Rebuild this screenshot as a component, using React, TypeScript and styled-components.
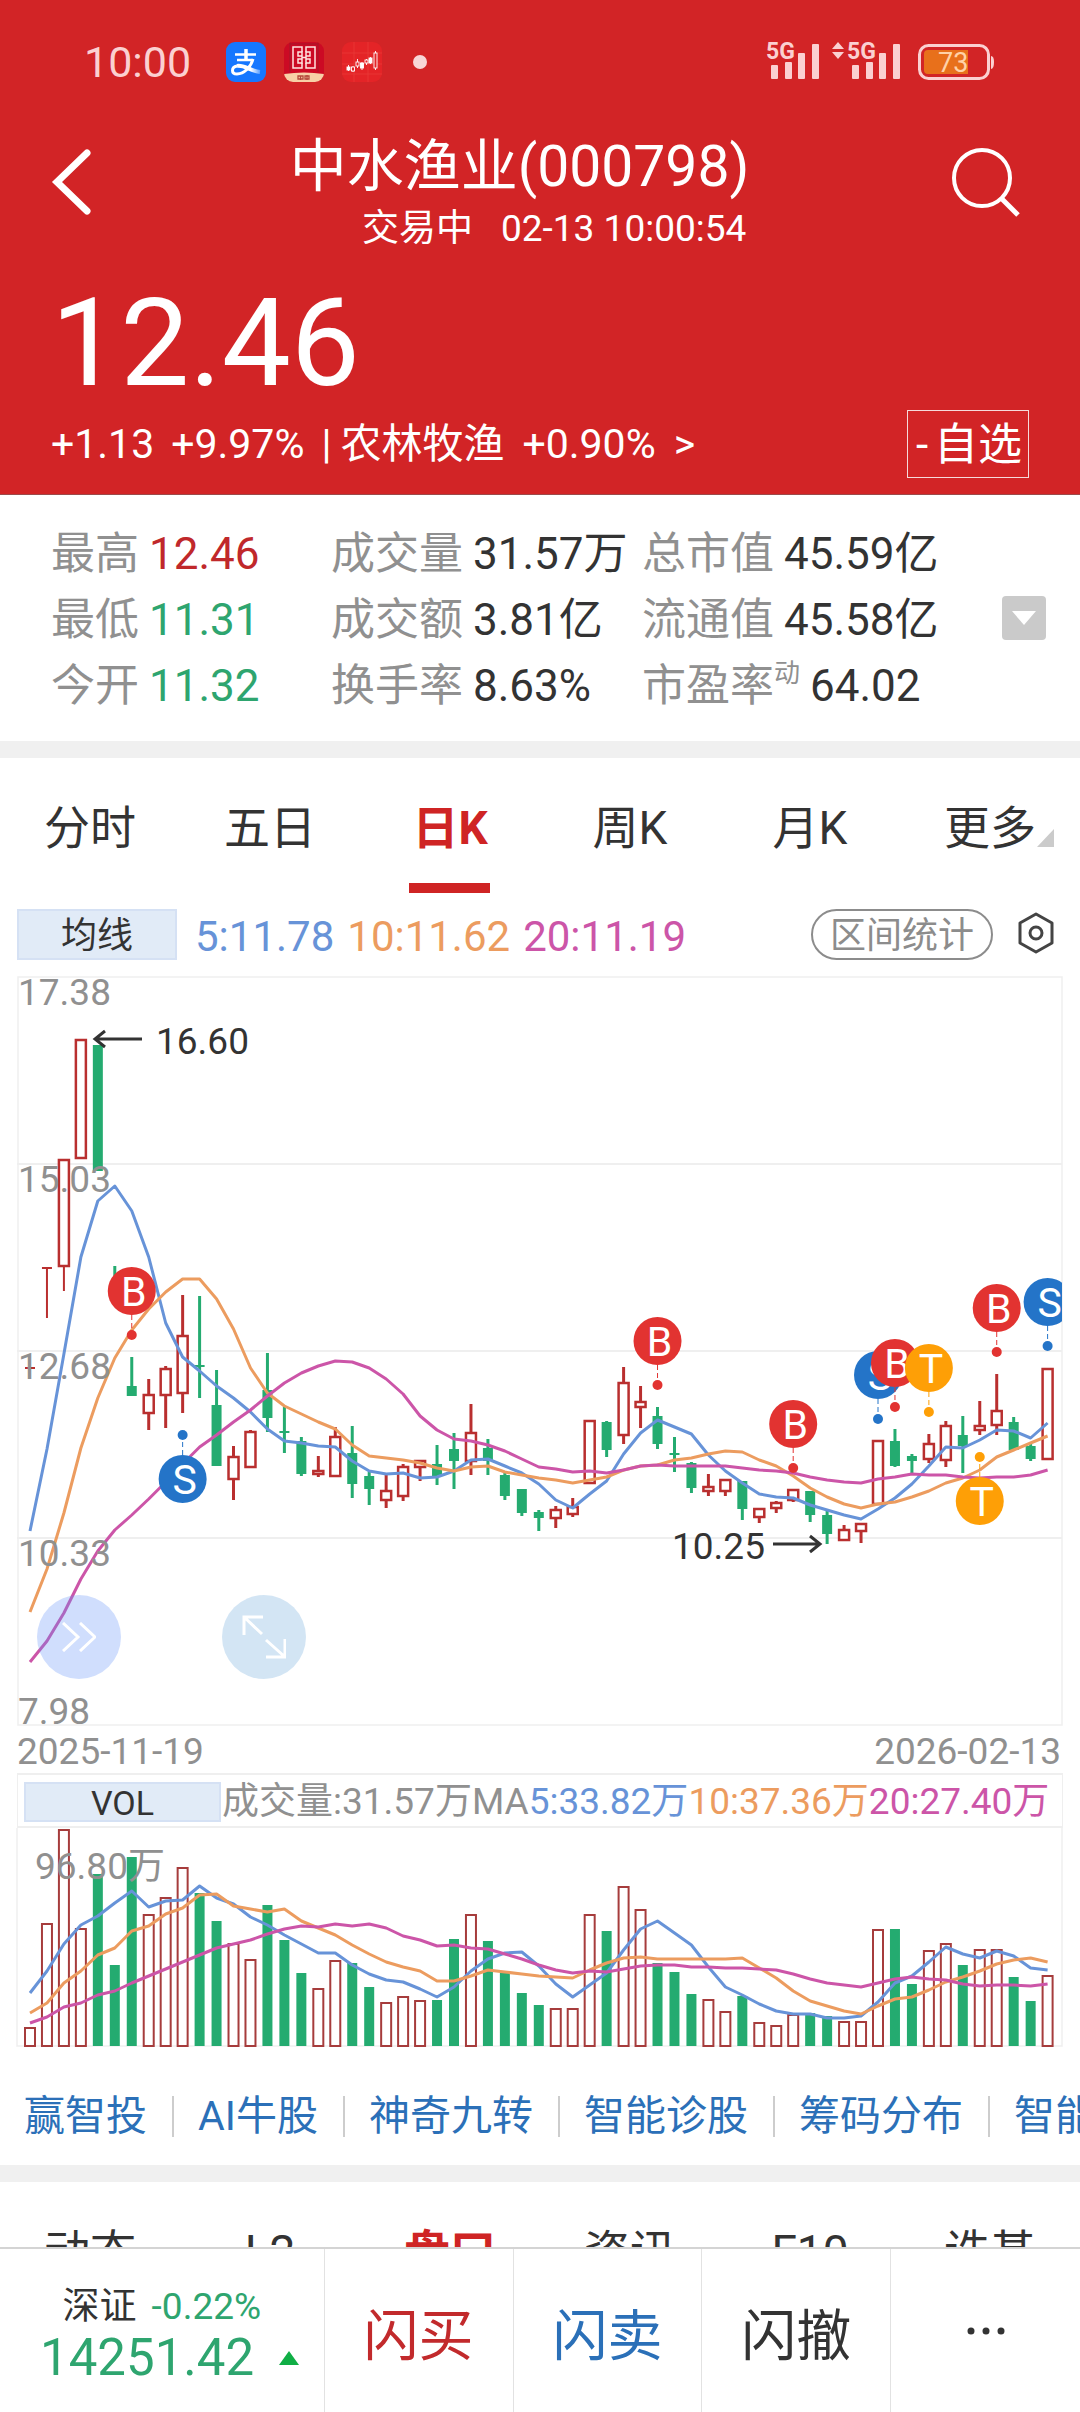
import React from "react";
import styled, { createGlobalStyle, css } from "styled-components";

const color = {
  brand: "#d22426",
  up: "#b92f2f",
  down: "#24ab70",
  downText: "#2ea56f",
  ink: "#333333",
  muted: "#909090",
  rule: "#efefef",
  ma5: "#6793d8",
  ma10: "#ec9c5f",
  ma20: "#cc55a8",
  link: "#2b70b8",
  soft: "#fbd0d1",
};

const GlobalStyle = createGlobalStyle`
  * { box-sizing: border-box; }
  html, body { margin: 0; padding: 0; background: #fff; }
  body { font-family: Roboto, "Noto Sans CJK SC", sans-serif; color: ${color.ink}; }
  button { font: inherit; color: inherit; background: none; border: 0; padding: 0; margin: 0; cursor: pointer; }
  dl, dt, dd, h1, p { margin: 0; font-weight: 400; }
  a { text-decoration: none; }
`;

const Screen = styled.div`
  display: flex;
  flex-direction: column;
  height: 100vh;
  overflow: hidden;
`;

const Content = styled.main`
  flex: 1;
  min-height: 0;
  overflow-y: auto;
  scrollbar-width: none;
`;

/* ---------- header ---------- */

const Header = styled.header`
  background: ${color.brand};
  color: #fff;
  border-bottom: 1px solid #9c4a4a;
`;

const StatusBar = styled.div`
  display: flex;
  align-items: center;
  height: 124px;
  padding: 0 85px 0 84px;
  color: ${color.soft};
`;

const Clock = styled.span`
  font-size: 43px;
  line-height: 50px;
  margin-right: 35px;
`;

const AppIcons = styled.div`
  display: flex;
  align-items: center;
  gap: 18px;
  flex: 1;
`;

const MoreDot = styled.span`
  width: 14px;
  height: 14px;
  margin-left: 13px;
  border-radius: 50%;
  background: #f8d6d6;
`;

const Nav = styled.div`
  display: flex;
  justify-content: space-between;
  padding: 7px 60px 0 51px;
`;

const IconButton = styled.button`
  display: flex;
  align-items: center;
  height: 102px;
`;

const Titles = styled.div`
  text-align: right;
`;

const Title = styled.h1`
  font-size: 57px;
  line-height: 72px;
`;

const Subtitle = styled.p`
  display: flex;
  justify-content: flex-end;
  gap: 28px;
  padding-right: 3px;
  font-size: 37px;
  line-height: 52px;
`;

const Price = styled.div`
  padding: 21px 51px 0;
  font-size: 123px;
  line-height: 134px;
`;

const QuoteRow = styled.div`
  display: flex;
  align-items: center;
  gap: 17px;
  padding: 0 51px 16px;
  font-size: 41px;
  line-height: 68px;
  white-space: nowrap;
`;

const Sector = styled.a`
  display: flex;
  gap: 18px;
  color: inherit;
`;

const SectorName = styled.span`
  display: flex;
  gap: 9px;
`;

const WatchButton = styled.button`
  display: flex;
  align-items: center;
  justify-content: center;
  gap: 6px;
  height: 68px;
  width: 122px;
  margin-left: auto;
  padding: 2px 0 0 2px;
  border: 1px solid #f6dada;
  font-size: 44px;
  line-height: 64px;
`;

/* ---------- figures ---------- */

const Stats = styled.section`
  display: flex;
  align-items: center;
  padding: 26px 34px 22px 51px;
`;

const StatGrid = styled.dl`
  flex: 1;
  display: grid;
  grid-template-columns: 280fr 311fr 360fr;
  font-size: 44px;
  line-height: 66px;
  white-space: nowrap;
`;

const Stat = styled.div`
  display: flex;
  gap: 10px;
`;

const StatLabel = styled.dt`
  display: flex;
  color: ${color.muted};
`;

const Sup = styled.sup`
  font-size: 26px;
  line-height: 40px;
  vertical-align: top;
`;

const StatValue = styled.dd<{ $tone?: string }>`
  color: ${(p) => p.$tone ?? color.ink};
`;

const Expand = styled.button`
  display: flex;
  align-items: center;
  justify-content: center;
  width: 44px;
  height: 44px;
  margin-bottom: 4px;
  border-radius: 4px;
  background: #cacaca;
`;

const Band = styled.div`
  height: 17px;
  background: #f0f0f0;
`;

/* ---------- tabs ---------- */

const TabBar = styled.div`
  display: grid;
  grid-template-columns: repeat(6, 1fr);
`;

const Tab = styled.button<{ $active?: boolean }>`
  position: relative;
  height: 135px;
  padding-top: 4px;
  font-size: 46px;
  line-height: 60px;
  ${(p) =>
    p.$active &&
    css`
      color: #cf2424;
      font-weight: 700;
      &::after {
        content: "";
        position: absolute;
        left: calc(50% - 41px);
        bottom: 0;
        width: 81px;
        height: 10px;
        background: #cf2424;
      }
    `}
`;

const Corner = styled.svg`
  position: absolute;
  right: 26px;
  bottom: 46px;
`;

/* ---------- chart ---------- */

const Indicators = styled.div`
  display: flex;
  align-items: center;
  padding: 16px 26px 16px 17px;
`;

const Badge = styled.button<{ $wide?: boolean }>`
  width: ${(p) => (p.$wide ? 197 : 160)}px;
  height: ${(p) => (p.$wide ? 40 : 51)}px;
  padding-top: 2px;
  border: 2px solid #d5e1f4;
  background: #e1ebf7;
  color: ${color.ink};
  font-size: ${(p) => (p.$wide ? 34 : 36)}px;
  line-height: 34px;
  flex: none;
`;

const Averages = styled.div`
  display: flex;
  gap: 13px;
  flex: 1;
  padding: 4px 0 0 18px;
  font-size: 42px;
  line-height: 46px;
  white-space: nowrap;
`;

const Tone = styled.span<{ $c: string }>`
  color: ${(p) => p.$c};
`;

const RangeButton = styled.button`
  width: 182px;
  height: 51px;
  margin-right: 25px;
  padding-top: 2px;
  border: 2px solid #8c8c8c;
  border-radius: 26px;
  color: #8c8c8c;
  font-size: 36px;
  line-height: 44px;
`;

const ChartArea = styled.div`
  position: relative;
`;

const Plot = styled.svg`
  display: block;
  width: 100%;
  height: auto;
  font-family: Roboto, "Noto Sans CJK SC", sans-serif;
  font-size: 37px;
`;

const FloatButton = styled.button<{ $left: number; $bg: string }>`
  position: absolute;
  left: ${(p) => p.$left}px;
  bottom: 47px;
  display: flex;
  align-items: center;
  justify-content: center;
  width: 84px;
  height: 84px;
  border-radius: 50%;
  background: ${(p) => p.$bg};
`;

const Dates = styled.div`
  display: flex;
  justify-content: space-between;
  padding: 4px 19px 0 17px;
  font-size: 37px;
  line-height: 43px;
  color: ${color.muted};
`;

const VolumeLegend = styled.div`
  display: flex;
  align-items: center;
  height: 55px;
  margin: 0 17px;
  padding: 2px 0 0 6px;
  border: 2px solid ${color.rule};
  border-width: 2px 1px;
  font-size: 37px;
  line-height: 44px;
  color: ${color.muted};
  white-space: nowrap;
`;

const LegendText = styled.span`
  padding-left: 1px;
`;

/* ---------- shortcuts and footer ---------- */

const Shortcuts = styled.nav`
  display: flex;
  align-items: center;
  height: 118px;
  padding: 20px 0 0;
  overflow: hidden;
`;

const Shortcut = styled.a`
  flex: none;
  padding: 0 25px 0 24px;
  border-right: 2px solid #cdcdcd;
  font-size: 41px;
  line-height: 41px;
  color: ${color.link};
`;

const Footer = styled.footer`
  flex: none;
  display: grid;
  grid-template-columns: 325fr repeat(4, 189fr);
  height: 165px;
  border-top: 2px solid #d4d4d4;
  background: #fff;
`;

const IndexCell = styled.a`
  display: flex;
  flex-direction: column;
  justify-content: center;
  padding-top: 8px;
  border-right: 1px solid #e2e2e2;
  color: ${color.downText};
`;

const IndexName = styled.span`
  display: flex;
  justify-content: center;
  gap: 15px;
  font-size: 37px;
  line-height: 46px;
`;

const IndexValue = styled.span`
  display: flex;
  align-items: center;
  gap: 25px;
  padding-left: 40px;
  font-size: 51px;
  line-height: 56px;
`;

const Trade = styled.button<{ $c: string }>`
  display: flex;
  align-items: center;
  justify-content: center;
  border-right: 1px solid #e2e2e2;
  font-size: 55px;
  color: ${(p) => p.$c};
  &:last-child {
    border-right: 0;
  }
`;

/* ---------- data ---------- */

type Candle = [kind: "r" | "g", high: number, top: number, bottom: number, low: number];

const candles: Candle[] = [
  ["r", 392, 392, 392, 392], ["r", 292, 292, 292, 342], ["r", 183, 183, 291, 315], ["r", 63, 63, 183, 183],
  ["g", 69, 69, 195, 195], ["g", 290, 308, 322, 322], ["g", 381, 410, 420, 420], ["r", 403, 418, 438, 454],
  ["r", 390, 392, 420, 452], ["r", 319, 359, 418, 437], ["g", 320, 389, 391, 422], ["g", 394, 429, 490, 490],
  ["r", 470, 480, 504, 524], ["r", 454, 455, 492, 492], ["g", 377, 414, 442, 456], ["g", 431, 455, 457, 477],
  ["g", 461, 465, 498, 500], ["r", 480, 494, 499, 501], ["r", 451, 460, 501, 501], ["g", 450, 477, 508, 522],
  ["g", 496, 500, 513, 529], ["r", 499, 514, 525, 532], ["r", 488, 490, 521, 525], ["r", 484, 484, 492, 505],
  ["g", 469, 488, 500, 509], ["g", 457, 473, 485, 513], ["r", 428, 456, 486, 499], ["g", 463, 472, 485, 499],
  ["g", 497, 499, 520, 524], ["g", 513, 513, 537, 540], ["g", 534, 536, 542, 555], ["r", 530, 533, 543, 552],
  ["r", 522, 530, 539, 541], ["r", 444, 444, 508, 508], ["g", 445, 446, 474, 481], ["r", 391, 406, 460, 468],
  ["r", 410, 425, 432, 452], ["g", 431, 440, 468, 473], ["g", 461, 477, 479, 496], ["g", 486, 487, 512, 517],
  ["r", 498, 510, 516, 520], ["r", 503, 503, 516, 520], ["g", 505, 505, 533, 544], ["r", 532, 532, 542, 547],
  ["r", 525, 526, 533, 537], ["r", 513, 513, 525, 526], ["g", 515, 515, 539, 546], ["g", 535, 539, 558, 568],
  ["r", 549, 553, 565, 565], ["r", 547, 547, 556, 567], ["r", 464, 464, 529, 529], ["g", 453, 465, 490, 491],
  ["g", 478, 480, 485, 497], ["r", 458, 467, 484, 487], ["r", 445, 449, 485, 491], ["g", 440, 459, 470, 497],
  ["r", 425, 449, 455, 459], ["r", 398, 434, 450, 459], ["g", 441, 446, 474, 474], ["g", 468, 470, 483, 485],
  ["r", 392, 392, 484, 484],
];

const priceMa5 = [
  555, 473, 378, 281, 225, 210, 235, 281, 347, 381, 395, 410, 422, 436, 453, 465, 467, 470, 471, 485, 495, 498, 497,
  502, 501, 495, 484, 483, 490, 497, 508, 524, 532, 518, 505, 478, 457, 444, 451, 458, 479, 495, 507, 518, 521, 522,
  529, 534, 539, 543, 533, 522, 508, 490, 471, 472, 464, 454, 455, 462, 447,
];
const priceMa10 = [
  636, 593, 537, 472, 422, 382, 354, 333, 316, 303, 303, 323, 353, 392, 417, 430, 438, 446, 453, 469, 480, 482, 484,
  487, 492, 495, 491, 490, 496, 499, 502, 504, 507, 504, 501, 494, 490, 489, 484, 482, 478, 475, 476, 484, 490, 500,
  512, 521, 528, 532, 528, 526, 521, 515, 507, 502, 494, 481, 474, 467, 460,
];
const priceMa20 = [
  686, 665, 637, 603, 575, 554, 539, 523, 506, 488, 471, 459, 446, 434, 420, 407, 397, 390, 385, 386, 392, 403, 418,
  440, 454, 463, 465, 469, 475, 483, 491, 493, 496, 495, 497, 494, 490, 489, 490, 490, 490, 490, 492, 494, 495, 497,
  501, 504, 506, 507, 503, 501, 498, 499, 499, 501, 502, 501, 501, 499, 494,
];

const volumeTops = [
  199, 95, 1, 100, 46, 137, 29, 86, 69, 39, 65, 93, 115, 131, 77, 112, 145, 160, 132, 135, 159, 174, 168, 172, 172,
  111, 86, 113, 145, 165, 177, 180, 180, 86, 103, 58, 81, 135, 144, 166, 171, 183, 168, 194, 197, 186, 185, 188, 193,
  193, 101, 101, 156, 122, 115, 137, 121, 121, 149, 173, 147,
];
const volMa5 = [
  165, 143, 116, 97, 88, 75, 63, 79, 73, 72, 58, 70, 76, 89, 97, 107, 116, 125, 125, 137, 146, 152, 154, 161, 169, 159,
  143, 131, 125, 124, 138, 156, 169, 157, 145, 122, 101, 93, 105, 117, 139, 159, 167, 176, 183, 186, 186, 190, 190,
  188, 174, 155, 148, 134, 119, 126, 130, 123, 128, 140, 142,
];
const volMa10 = [
  185, 175, 155, 143, 127, 120, 103, 98, 86, 80, 67, 66, 78, 81, 84, 81, 93, 100, 107, 117, 126, 134, 139, 143, 153,
  153, 148, 142, 144, 146, 148, 149, 150, 142, 135, 130, 129, 131, 131, 131, 131, 131, 130, 140, 150, 163, 173, 178,
  183, 186, 178, 171, 169, 162, 154, 149, 143, 136, 132, 130, 134,
];
const volMa20 = [
  195, 189, 179, 175, 167, 163, 155, 148, 141, 134, 127, 120, 116, 112, 106, 101, 98, 99, 96, 98, 96, 100, 108, 112,
  118, 117, 120, 121, 126, 131, 137, 142, 145, 143, 144, 141, 138, 137, 137, 139, 139, 140, 140, 141, 142, 146, 151,
  155, 157, 159, 155, 151, 149, 151, 152, 156, 158, 157, 157, 158, 156,
];

const markerFill = { B: "#e23331", S: "#2474c8", T: "#fe9f06" };
const markers: { at: number; kind: "B" | "S" | "T"; y: number; dot: number }[] = [
  { at: 6, kind: "B", y: 315, dot: 359 },
  { at: 9, kind: "S", y: 503, dot: 459 },
  { at: 37, kind: "B", y: 365, dot: 409 },
  { at: 45, kind: "B", y: 448, dot: 492 },
  { at: 50, kind: "S", y: 399, dot: 443 },
  { at: 51, kind: "B", y: 387, dot: 431 },
  { at: 53, kind: "T", y: 392, dot: 436 },
  { at: 56, kind: "T", y: 525, dot: 481 },
  { at: 57, kind: "B", y: 332, dot: 376 },
  { at: 60, kind: "S", y: 326, dot: 370 },
];

const candleX = (i: number) => 30 + 16.96 * i;
const linePoints = (ys: number[]) => ys.map((y, i) => `${candleX(i).toFixed(1)},${y}`).join(" ");

/* ---------- drawings ---------- */

const AlipayIcon = () => (
  <svg width="40" height="40" viewBox="0 0 40 40" fill="none" stroke="#fff" aria-hidden="true">
    <defs>
      <linearGradient id="tail" x1="0" x2="1">
        <stop offset="0.600" stopColor="#fff" />
        <stop offset="1" stopColor="#fff" stopOpacity="0.300" />
      </linearGradient>
    </defs>
    <rect width="40" height="40" rx="9" fill="#1677ff" stroke="none" />
    <path d="M20 7V18" strokeWidth="3.500" />
    <path d="M9 12.500H30M11 18H27" strokeWidth="2.500" />
    <path d="M27 17C25 25 18 32 11 32C5 32 5 25 11 24" strokeWidth="3" />
    <path d="M11 24C18 22.500 24 29 34 30" stroke="url(#tail)" strokeWidth="4" />
  </svg>
);

const BankIcon = () => (
  <svg width="40" height="40" viewBox="0 0 40 40" aria-hidden="true">
    <defs>
      <clipPath id="bankTile"><rect width="40" height="40" rx="9" /></clipPath>
    </defs>
    <g clipPath="url(#bankTile)">
      <rect width="40" height="40" fill="#cc0a24" />
      <path d="M6 0V30M34 0V30M6 2H34" stroke="#b01428" strokeWidth="1.500" fill="none" />
      <path d="M0 32Q20 29 40 32V40H0Z" fill="#f8d0a6" />
      <g fill="none" stroke="#ffe3df" strokeWidth="1.500">
        <path d="M18 10V5H9V26H18V21M22 10V5H31V26H22V21" />
        <path d="M14 10H18V14H14ZM22 10H26V14H22ZM14 17H18V21H14ZM22 17H26V21H22ZM18 12V19M22 12V19M18 15.500H22" />
      </g>
      <path d="M14 34H19V37H14ZM21 34H25V37H21ZM16.500 34V38M23 33V38" fill="none" stroke="#b4473a" strokeWidth="1.300" />
    </g>
  </svg>
);

const StockIcon = () => (
  <svg width="40" height="40" viewBox="0 0 40 40" aria-hidden="true">
    <rect width="40" height="40" rx="9" fill="#e42427" />
    <path d="M12 0V40M26 0V40M0 11H40M0 22H40M0 32H40" stroke="#e83a39" strokeWidth="0.800" />
    <g fill="#fff" stroke="#fff" strokeWidth="0.900">
      <path d="M6.500 23V29M11 24V30M15.500 17V26M20 20V28M24.500 17V23M28.500 15V22M33.500 9V28" />
      <rect x="5" y="25" width="3" height="3" />
      <rect x="9.500" y="25" width="3" height="4" fill="#e42427" />
      <rect x="14" y="20" width="3" height="4" fill="#e42427" />
      <rect x="18.500" y="21" width="3" height="5" />
      <rect x="23" y="18" width="3" height="3" fill="#e42427" />
      <rect x="27" y="16" width="3" height="5" />
      <rect x="32" y="11" width="3" height="15" fill="#e42427" />
    </g>
  </svg>
);

const PhoneStatus = () => (
  <svg width="229" height="60" viewBox="0 -10 229 60" fill={color.soft} fontFamily="Roboto, sans-serif" aria-label="5G, 5G, 73%">
    {[0, 81].map((x) => (
      <g key={x}>
        <text x={x} y="17" fontSize="23" fontWeight="700">5G</text>
        <rect x={x + 5} y="23" width="7" height="14" rx="1" />
        <rect x={x + 19} y="20" width="7" height="17" rx="1" />
        <rect x={x + 32} y="11" width="7" height="26" rx="1" />
        <rect x={x + 46} y="2" width="7" height="35" rx="1" />
      </g>
    ))}
    <path d="M66 7L72 0L78 7ZM66 10L72 17L78 10Z" />
    <rect x="153.500" y="3.500" width="69" height="33" rx="9" fill="none" stroke={color.soft} strokeWidth="3" />
    <path d="M225 14Q228 14 228 20Q228 27 225 27Z" />
    <path d="M162 8H202V32H162Q158 32 158 28V12Q158 8 162 8Z" fill="#e8701b" />
    <text x="172" y="30" fontSize="27" fill="#ffd2a8">73</text>
  </svg>
);

const Chevron = () => (
  <svg width="40" height="66" viewBox="0 0 40 66" fill="none" stroke="#fff" strokeWidth="7" strokeLinecap="round">
    <path d="M36 4L6 33L36 62" />
  </svg>
);

const SearchIcon = () => (
  <svg width="72" height="70" viewBox="0 0 72 70" fill="none" stroke="#fff" strokeWidth="4">
    <circle cx="34" cy="31" r="28" />
    <path d="M53 51L70 68" strokeWidth="5" />
  </svg>
);

const Hexagon = () => (
  <svg width="36" height="42" viewBox="0 0 36 42" fill="none" stroke="#444" strokeWidth="3">
    <path d="M18 2L34 11V31L18 40L2 31V11Z" strokeLinejoin="round" />
    <circle cx="18" cy="21" r="6" />
  </svg>
);

function PriceChart() {
  return (
    <Plot viewBox="0 0 1080 750" role="img" aria-label="日K">
      <defs>
        <clipPath id="plotFrame"><rect x="17" y="0" width="1045" height="750" /></clipPath>
      </defs>
      <g stroke={color.rule} strokeWidth="2" fill="none">
        <rect x="18" y="1" width="1044" height="748" strokeWidth="1.500" />
        <path d="M17 188H1062M17 375H1062M17 562H1062" />
      </g>
      {candles.map(([kind, high, top, bottom, low], i) => {
        const x = candleX(i);
        const tint = kind === "r" ? color.up : color.down;
        const h = bottom - top;
        return (
          <g key={i} stroke={tint} strokeWidth={high < 300 && i < 5 ? 2 : 3}>
            {high < top && <path d={`M${x} ${high}V${top}`} />}
            {low > bottom && <path d={`M${x} ${bottom}V${low}`} />}
            {h === 0 && <path d={`M${x - 5} ${top}H${x + 5}`} strokeWidth="2" />}
            {h > 0 && kind === "g" && <rect x={x - 5} y={top} width="10" height={h} fill={tint} stroke="none" />}
            {h > 0 && kind === "r" && (
              <rect x={x - 5} y={top + 1} width="10" height={Math.max(h - 2, 2)} fill="#fff" strokeWidth="2.500" />
            )}
          </g>
        );
      })}
      <g fill="none" strokeWidth="3" strokeLinejoin="round">
        <polyline points={linePoints(priceMa5)} stroke={color.ma5} />
        <polyline points={linePoints(priceMa10)} stroke={color.ma10} />
        <polyline points={linePoints(priceMa20)} stroke={color.ma20} />
      </g>
      <g fill={color.muted}>
        <text x="18" y="29">17.38</text>
        <text x="18" y="216">15.03</text>
        <text x="18" y="403">12.68</text>
        <text x="18" y="590">10.33</text>
        <text x="18" y="748">7.98</text>
      </g>
      <g fill={color.ink}>
        <text x="156" y="78">16.60</text>
        <text x="672" y="583">10.25</text>
      </g>
      <g fill="none" stroke={color.ink} strokeWidth="3">
        <path d="M142 63H95M105 55L95 63L105 71" />
        <path d="M773 568H820M810 560L820 568L810 576" />
      </g>
      <g clipPath="url(#plotFrame)">
        {markers.map(({ at, kind, y, dot }) => (
          <g key={at} fill={markerFill[kind]}>
            <path d={`M${candleX(at)} ${y}V${dot}`} stroke={markerFill[kind]} strokeDasharray="5 3" />
            <circle cx={candleX(at)} cy={dot} r="5" />
            <circle cx={candleX(at)} cy={y} r="24" />
            <text x={candleX(at) + 2} y={y + 15} fontSize="41" textAnchor="middle" fill="#fff">{kind}</text>
          </g>
        ))}
      </g>
    </Plot>
  );
}

function VolumeChart() {
  return (
    <Plot viewBox="0 0 1080 219" role="img" aria-label="VOL">
      <path d="M17 0V218H1062V0" fill="none" stroke={color.rule} strokeWidth="1.500" />
      {volumeTops.map((top, i) =>
        candles[i][0] === "r" ? (
          <rect key={i} x={candleX(i) - 5} y={top + 1} width="10" height={217 - top} fill="#fff" stroke="#a63c3c" strokeWidth="2" />
        ) : (
          <rect key={i} x={candleX(i) - 5} y={top} width="10" height={218 - top} fill={color.down} />
        )
      )}
      <g fill="none" strokeWidth="3" strokeLinejoin="round">
        <polyline points={linePoints(volMa5)} stroke={color.ma5} />
        <polyline points={linePoints(volMa10)} stroke={color.ma10} />
        <polyline points={linePoints(volMa20)} stroke={color.ma20} />
      </g>
      <text x="35" y="51" fill={color.muted}>96.80万</text>
    </Plot>
  );
}

/* ---------- page ---------- */

const stats: { label: string; sup?: string; value: string; tone?: string }[] = [
  { label: "最高", value: "12.46", tone: "#c0282b" },
  { label: "成交量", value: "31.57万" },
  { label: "总市值", value: "45.59亿" },
  { label: "最低", value: "11.31", tone: color.downText },
  { label: "成交额", value: "3.81亿" },
  { label: "流通值", value: "45.58亿" },
  { label: "今开", value: "11.32", tone: color.downText },
  { label: "换手率", value: "8.63%" },
  { label: "市盈率", sup: "动", value: "64.02" },
];

const chartTabs = ["分时", "五日", "日K", "周K", "月K", "更多"];
const infoTabs = ["动态", "L2", "盘口", "资讯", "F10", "诜基"];
const shortcuts = ["赢智投", "AI牛股", "神奇九转", "智能诊股", "筹码分布", "智能盯盘"];

export default function App() {
  return (
    <Screen>
      <GlobalStyle />
      <Content>
        <Header>
          <StatusBar>
            <Clock>10:00</Clock>
            <AppIcons>
              <AlipayIcon />
              <BankIcon />
              <StockIcon />
              <MoreDot />
            </AppIcons>
            <PhoneStatus />
          </StatusBar>
          <Nav>
            <IconButton aria-label="返回"><Chevron /></IconButton>
            <Titles>
              <Title>中水渔业(000798)</Title>
              <Subtitle><span>交易中</span><span>02-13 10:00:54</span></Subtitle>
            </Titles>
            <IconButton aria-label="搜索"><SearchIcon /></IconButton>
          </Nav>
          <Price>12.46</Price>
          <QuoteRow>
            <span>+1.13</span>
            <span>+9.97%</span>
            <Sector href="#sector">
              <SectorName><span>|</span><span>农林牧渔</span></SectorName>
              <span>+0.90%</span>
              <span>&gt;</span>
            </Sector>
            <WatchButton><span>-</span><span>自选</span></WatchButton>
          </QuoteRow>
        </Header>

        <Stats>
          <StatGrid>
            {stats.map((s) => (
              <Stat key={s.label}>
                <StatLabel>{s.label}{s.sup && <Sup>{s.sup}</Sup>}</StatLabel>
                <StatValue $tone={s.tone}>{s.value}</StatValue>
              </Stat>
            ))}
          </StatGrid>
          <Expand aria-label="展开">
            <svg width="24" height="14" viewBox="0 0 24 14" fill="#fff"><path d="M0 0H24L12 14Z" /></svg>
          </Expand>
        </Stats>
        <Band />

        <TabBar>
          {chartTabs.map((t) => (
            <Tab key={t} $active={t === "日K"}>
              {t}
              {t === "更多" && (
                <Corner width="17" height="18" viewBox="0 0 17 18" fill="#cbcbcb"><path d="M17 0V18H0Z" /></Corner>
              )}
            </Tab>
          ))}
        </TabBar>

        <Indicators>
          <Badge>均线</Badge>
          <Averages>
            <Tone $c={color.ma5}>5:11.78</Tone>
            <Tone $c={color.ma10}>10:11.62</Tone>
            <Tone $c={color.ma20}>20:11.19</Tone>
          </Averages>
          <RangeButton>区间统计</RangeButton>
          <button aria-label="设置"><Hexagon /></button>
        </Indicators>

        <ChartArea>
          <PriceChart />
          <FloatButton $left={37} $bg="rgba(100, 145, 250, 0.3)" aria-label="前进">
            <svg width="34" height="30" viewBox="0 0 34 30" fill="none" stroke="#fff" strokeWidth="3">
              <path d="M1 1L16 15L1 29M18 1L33 15L18 29" />
            </svg>
          </FloatButton>
          <FloatButton $left={222} $bg="rgba(110, 170, 220, 0.3)" aria-label="全屏">
            <svg width="44" height="44" viewBox="0 0 44 44" fill="none" stroke="#fff" strokeWidth="3">
              <path d="M21 2H2V20M2 2L20 19M24 42H43V24M43 42L24 25" />
            </svg>
          </FloatButton>
        </ChartArea>
        <Dates><span>2025-11-19</span><span>2026-02-13</span></Dates>
        <VolumeLegend>
          <Badge $wide>VOL</Badge>
          <LegendText>成交量:31.57万MA</LegendText>
          <Tone $c={color.ma5}>5:33.82万</Tone>
          <Tone $c={color.ma10}>10:37.36万</Tone>
          <Tone $c={color.ma20}>20:27.40万</Tone>
        </VolumeLegend>
        <VolumeChart />

        <Shortcuts>
          {shortcuts.map((s) => <Shortcut key={s} href="#tool">{s}</Shortcut>)}
        </Shortcuts>
        <Band />
        <TabBar>
          {infoTabs.map((t) => <Tab key={t} $active={t === "盘口"}>{t}</Tab>)}
        </TabBar>
      </Content>

      <Footer>
        <IndexCell href="#index">
          <IndexName><Tone $c={color.ink}>深证</Tone><span>-0.22%</span></IndexName>
          <IndexValue>
            14251.42
            <svg width="20" height="14" viewBox="0 0 20 14" fill="#10ae45"><path d="M10 0L20 14H0Z" /></svg>
          </IndexValue>
        </IndexCell>
        <Trade $c="#c22a2c">闪买</Trade>
        <Trade $c={color.link}>闪卖</Trade>
        <Trade $c={color.ink}>闪撤</Trade>
        <Trade $c={color.ink} aria-label="更多">
          <svg width="38" height="8" viewBox="0 0 38 8" fill={color.ink}>
            <circle cx="4" cy="4" r="3.500" /><circle cx="19" cy="4" r="3.500" /><circle cx="34" cy="4" r="3.500" />
          </svg>
        </Trade>
      </Footer>
    </Screen>
  );
}
